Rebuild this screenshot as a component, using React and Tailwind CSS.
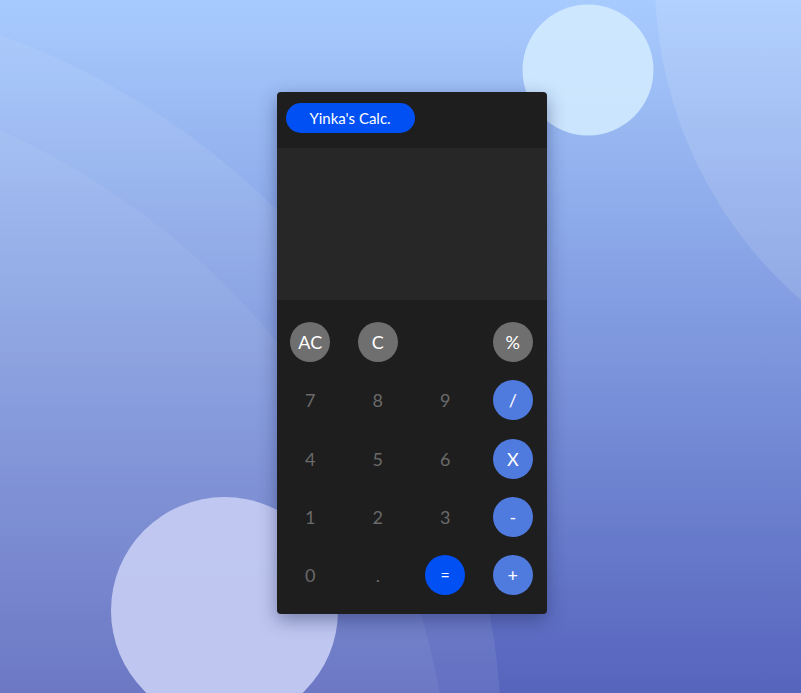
import React from 'react'

const keys = [
  { label: 'AC', kind: 'fn' },
  { label: 'C', kind: 'fn' },
  { label: '', kind: 'blank' },
  { label: '%', kind: 'fn' },
  { label: '7', kind: 'num' },
  { label: '8', kind: 'num' },
  { label: '9', kind: 'num' },
  { label: '/', kind: 'op' },
  { label: '4', kind: 'num' },
  { label: '5', kind: 'num' },
  { label: '6', kind: 'num' },
  { label: 'X', kind: 'op' },
  { label: '1', kind: 'num' },
  { label: '2', kind: 'num' },
  { label: '3', kind: 'num' },
  { label: '-', kind: 'op' },
  { label: '0', kind: 'num' },
  { label: '.', kind: 'num' },
  { label: '=', kind: 'eq' },
  { label: '+', kind: 'op' },
]

const styles = {
  fn: 'bg-[#6f6f6f] text-white text-[18px]',
  op: 'bg-[#4f7ade] text-white text-[18px]',
  eq: 'bg-[#0050f4] text-white text-[16px]',
  num: 'text-[#6a6a6a] text-[18px]',
  blank: '',
}

function Backdrop() {
  return (
    <svg className="absolute inset-0 w-full h-full" viewBox="0 0 801 693" preserveAspectRatio="none">
      <circle cx="-258" cy="750" r="760" fill="#ffffff" fillOpacity="0.08" />
      <circle cx="-316" cy="830" r="768" fill="#ffffff" fillOpacity="0.06" />
      <circle cx="1079" cy="-20" r="424" fill="#ffffff" fillOpacity="0.12" />
      <circle cx="588" cy="70" r="65.5" fill="#d2eaff" fillOpacity="0.9" />
      <circle cx="224.5" cy="610.5" r="113.5" fill="#c6cdf3" fillOpacity="0.92" />
    </svg>
  )
}

export default function App() {
  return (
    <div className="relative w-full h-[693px] overflow-hidden bg-linear-to-b from-[#a8cbfe] to-[#5764bc] font-['Lato','Liberation_Sans',sans-serif]">
      <Backdrop />
      <div className="relative flex justify-center pt-[92px] pl-[22px]">
        <div className="w-[270px] h-[522px] bg-[#1e1e1e] rounded-[4px] overflow-hidden shadow-[0_6px_18px_rgba(30,40,90,0.45)] flex flex-col">
          <div className="h-[56px] pl-[9px] pt-[11px] shrink-0">
            <div className="w-[129px] h-[30px] rounded-full bg-[#0050f4] text-white text-[15px] flex items-center justify-center">
              Yinka's Calc.
            </div>
          </div>
          <div className="h-[152px] bg-[#272727] shrink-0" />
          <div className="grid grid-cols-4 auto-rows-[58.3px] pt-[13px]">
            {keys.map((k, i) => (
              <div key={i} className="flex items-center justify-center">
                {k.kind !== 'blank' && (
                  <button className={`w-10 h-10 rounded-full flex items-center justify-center leading-none ${styles[k.kind]}`}>
                    {k.label}
                  </button>
                )}
              </div>
            ))}
          </div>
        </div>
      </div>
    </div>
  )
}
